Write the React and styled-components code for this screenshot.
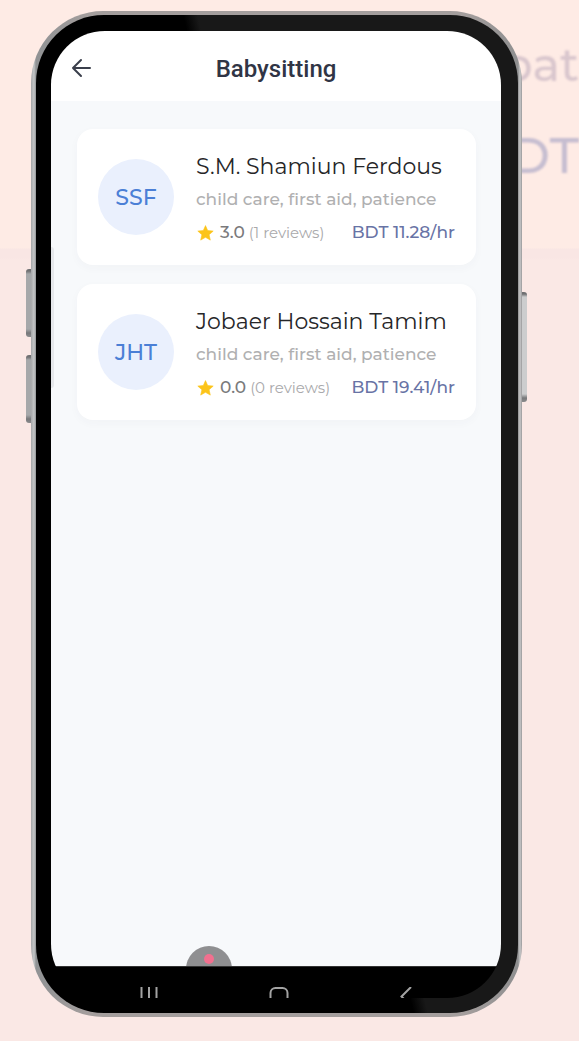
import React from "react";
import styled, { createGlobalStyle } from "styled-components";

const GlobalStyle = createGlobalStyle`
  * { box-sizing: border-box; }
  body {
    margin: 0;
    font-family: Montserrat, Inter, "Liberation Sans", sans-serif;
    background: #fae8e5;
  }
  button { border: 0; padding: 0; background: none; cursor: pointer; }
`;

const Page = styled.div`
  position: relative;
  display: flex;
  flex-direction: column;
  min-height: 100vh;
  padding: 11px 57px 24px 31px;
  overflow: hidden;
  background: linear-gradient(#feebe5 248px, #f9e6e4 249px, #f9e6e4 258px, #fae8e5 260px);
`;

const Backdrop = styled.div`
  position: absolute;
  top: 32px;
  right: 0;
  display: flex;
  flex-direction: column;
  align-items: flex-end;
  gap: 25px;
  filter: blur(1px);
`;

const BackdropText = styled.span`
  font-size: ${(p) => p.$size}px;
  line-height: 66px;
  font-weight: 500;
  color: ${(p) => p.$color};
`;

const Phone = styled.div`
  position: relative;
  display: flex;
  flex: 1;
  padding: 4px 4px 4px 5px;
  border-radius: 72px;
  background: linear-gradient(90deg, #a5a6a8 0, #c4c6c7 3px, #909294 5px, #a49e9d 12%, #a49e9d 88%, #8f8f90 calc(100% - 4px), #c9c9ca calc(100% - 2px), #98989a 100%);
`;

const SideKey = styled.span`
  position: absolute;
  top: ${(p) => p.$top}px;
  ${(p) => p.$side}: -5px;
  width: 5px;
  height: ${(p) => p.$height}px;
  border-radius: ${(p) => (p.$side === "left" ? "3px 0 0 3px" : "0 3px 3px 0")};
  background: linear-gradient(
    #6f7072 0, #6f7072 2px, ${(p) => p.$color} 5px,
    ${(p) => p.$color} calc(100% - 8px), #77787a calc(100% - 4px), #8b8c8e 100%
  );
`;

const Bezel = styled.div`
  display: flex;
  flex: 1;
  min-width: 0;
  padding: 16px 17px 15px 15px;
  border-radius: 68px;
  background: linear-gradient(77deg, #000 53%, #181818 55%);
`;

const Screen = styled.div`
  position: relative;
  display: flex;
  flex-direction: column;
  flex: 1;
  min-width: 0;
  overflow: hidden;
  border-radius: 54px;
`;

const Header = styled.header`
  display: grid;
  grid-template-columns: 24px 1fr 24px;
  align-items: center;
  height: 70px;
  padding: 4px 18px 0;
  background: #fff;
`;

const BackButton = styled.button`
  display: flex;
  color: #3a3e4b;
`;

const Title = styled.h1`
  margin: 0;
  padding-top: 2px;
  font-family: Roboto, sans-serif;
  font-size: 24px;
  font-weight: 500;
  line-height: 30px;
  text-align: center;
  color: #303545;
`;

const Content = styled.main`
  position: relative;
  flex: 1;
  padding: 28px 25px 28px 26px;
  overflow: hidden;
  background: #f7f9fb;
`;

const EdgeHandle = styled.span`
  position: absolute;
  top: 216px;
  left: 0;
  z-index: 1;
  width: 3px;
  height: 141px;
  border-radius: 0 3px 3px 0;
  background: #e6e8eb;
`;

const List = styled.ul`
  display: flex;
  flex-direction: column;
  gap: 19px;
  margin: 0;
  padding: 0;
  list-style: none;
`;

const Card = styled.li`
  display: flex;
  align-items: center;
  gap: 22px;
  padding: 16px 21px;
  border-radius: 16px;
  background: #fff;
  box-shadow: 0 3px 10px rgba(60, 70, 90, 0.03);
`;

const Avatar = styled.div`
  display: flex;
  align-items: center;
  justify-content: center;
  flex: none;
  width: 76px;
  height: 76px;
  border-radius: 50%;
  background: #eaf0fd;
  color: #4b7fd6;
  font-size: 22px;
  font-weight: 500;
`;

const Details = styled.div`
  display: flex;
  flex-direction: column;
  flex: 1;
  min-width: 0;
  padding-top: 5px;
  line-height: 33px;
  white-space: nowrap;
`;

const Name = styled.h2`
  margin: 0;
  font-size: 22px;
  font-weight: 400;
  line-height: 33px;
  color: #262628;
`;

const Skills = styled.p`
  margin: 0;
  font-size: 17px;
  font-weight: 500;
  color: #b0b0b1;
`;

const Meta = styled.div`
  display: flex;
  align-items: center;
`;

const Score = styled.span`
  margin: 0 4px 0 5px;
  font-size: 17px;
  font-weight: 500;
  color: #7a7a7c;
`;

const Reviews = styled.span`
  font-size: 15px;
  color: #a9a9ab;
`;

const Price = styled.span`
  margin-left: auto;
  font-size: 17px;
  font-weight: 500;
  color: #6873a5;
`;

const RecordBubble = styled.span`
  position: absolute;
  bottom: -26px;
  left: 30%;
  display: flex;
  justify-content: center;
  width: 46px;
  height: 46px;
  padding-top: 8px;
  border-radius: 50%;
  background: #8f8f91;

  &::after {
    content: "";
    width: 10px;
    height: 10px;
    border-radius: 50%;
    background: #f2708f;
  }
`;

const NavBar = styled.nav`
  display: flex;
  justify-content: space-around;
  height: 32px;
  padding: 20px 33px 0;
  border-top: 1px solid #333;
  background: #000;
`;

const NavButton = styled.button`
  display: flex;
  align-items: flex-start;
  height: 20px;
  color: #a3a3a3;
`;

const sitters = [
  { initials: "SSF", name: "S.M. Shamiun Ferdous", skills: "child care, first aid, patience", score: "3.0", reviews: 1, price: "11.28" },
  { initials: "JHT", name: "Jobaer Hossain Tamim", skills: "child care, first aid, patience", score: "0.0", reviews: 0, price: "19.41" },
];

const Star = () => (
  <svg width="19" height="18" viewBox="0 0 19 18" aria-hidden="true">
    <path d="M9.5 1.6l2.2 5 5.5.5-4.1 3.6 1.2 5.4-4.8-2.8-4.8 2.8 1.2-5.4-4.1-3.6 5.5-.5z" fill="#fcc419" stroke="#fcc419" strokeWidth="0.6" strokeLinejoin="round" />
  </svg>
);

function SitterCard({ sitter }) {
  return (
    <Card>
      <Avatar>{sitter.initials}</Avatar>
      <Details>
        <Name>{sitter.name}</Name>
        <Skills>{sitter.skills}</Skills>
        <Meta>
          <Star />
          <Score>{sitter.score}</Score>
          <Reviews>({sitter.reviews} reviews)</Reviews>
          <Price>BDT {sitter.price}/hr</Price>
        </Meta>
      </Details>
    </Card>
  );
}

export default function App() {
  return (
    <Page>
      <GlobalStyle />
      <Backdrop aria-hidden="true">
        <BackdropText $size={46} $color="#d9c6cd">pat</BackdropText>
        <BackdropText $size={50} $color="#c6bdd0">BDT</BackdropText>
      </Backdrop>
      <Phone>
        <SideKey $side="left" $top={258} $height={68} $color="#a6a8aa" />
        <SideKey $side="left" $top={344} $height={68} $color="#a6a8aa" />
        <SideKey $side="right" $top={281} $height={110} $color="#cccdce" />
        <Bezel>
          <Screen>
            <EdgeHandle />
            <Header>
              <BackButton type="button" aria-label="Back">
                <svg width="24" height="24" viewBox="0 0 24 24" fill="none" stroke="currentColor" strokeWidth="2" strokeLinecap="round" strokeLinejoin="round">
                  <path d="M21 12H4M12 4l-8 8 8 8" />
                </svg>
              </BackButton>
              <Title>Babysitting</Title>
            </Header>
            <Content>
              <List>
                {sitters.map((s) => (
                  <SitterCard key={s.initials} sitter={s} />
                ))}
              </List>
              <RecordBubble />
            </Content>
            <NavBar>
              <NavButton type="button" aria-label="Recent apps">
                <svg width="18" height="20" viewBox="0 0 18 20" fill="none" stroke="currentColor" strokeWidth="2">
                  <path d="M1.5 0v11M9 0v11M16.500 0v11" />
                </svg>
              </NavButton>
              <NavButton type="button" aria-label="Home">
                <svg width="20" height="20" viewBox="0 0 20 20" fill="none" stroke="currentColor" strokeWidth="2">
                  <rect x="1.500" y="1" width="17" height="17" rx="5" />
                </svg>
              </NavButton>
              <NavButton type="button" aria-label="Go back">
                <svg width="12" height="20" viewBox="0 0 12 20" fill="none" stroke="currentColor" strokeWidth="2">
                  <path d="M11 0L1.500 9.500l9.500 9.500" />
                </svg>
              </NavButton>
            </NavBar>
          </Screen>
        </Bezel>
      </Phone>
    </Page>
  );
}
